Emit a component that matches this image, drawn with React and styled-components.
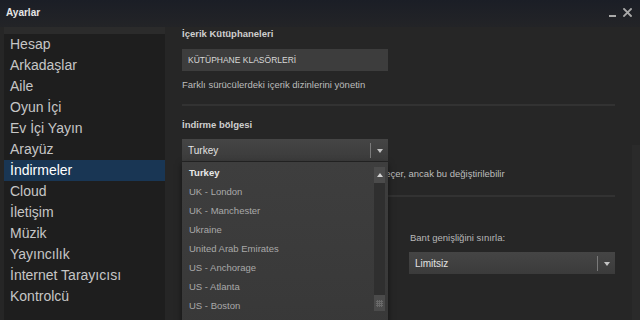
import styled, { createGlobalStyle } from "styled-components";

const GlobalStyle = createGlobalStyle`
  html, body {
    margin: 0;
    padding: 0;
    background: #262626;
  }
  * {
    box-sizing: border-box;
  }
`;

const NAV_ITEMS = [
  "Hesap",
  "Arkadaşlar",
  "Aile",
  "Oyun İçi",
  "Ev İçi Yayın",
  "Arayüz",
  "İndirmeler",
  "Cloud",
  "İletişim",
  "Müzik",
  "Yayıncılık",
  "İnternet Tarayıcısı",
  "Kontrolcü",
];

const REGIONS = [
  "Turkey",
  "UK - London",
  "UK - Manchester",
  "Ukraine",
  "United Arab Emirates",
  "US - Anchorage",
  "US - Atlanta",
  "US - Boston",
];

// Whole settings window
const App = () => {
  return (
    <>
      <GlobalStyle />
      <Window>
        <TitleBar>
          <Title>Ayarlar</Title>
          <WindowButtons>
            <Minimize />
            <CloseIcon />
          </WindowButtons>
        </TitleBar>
        <Body>
          <Sidebar>
            <SidebarTop />
            {NAV_ITEMS.map((item) => (
              <NavItem key={item} active={item === "İndirmeler"}>
                {item}
              </NavItem>
            ))}
          </Sidebar>
          <Content>
            <Heading>İçerik Kütüphaneleri</Heading>
            <Button>KÜTÜPHANE KLASÖRLERİ</Button>
            <Description>Farklı sürücülerdeki içerik dizinlerini yönetin</Description>
            <Divider />
            <Heading top={12}>İndirme bölgesi</Heading>
            <SelectWrap>
              <Select>
                <span>Turkey</span>
                <SelectArrow />
              </Select>
              <DropList>
                <ListItems>
                  {REGIONS.map((region, i) => (
                    <ListItem key={region} selected={i === 0}>
                      {region}
                    </ListItem>
                  ))}
                </ListItems>
                <ListScroll>
                  <ScrollUp />
                  <ScrollThumb />
                </ListScroll>
              </DropList>
            </SelectWrap>
            {/* the start of this line sits under the open region list */}
            <Description top={7}>
              Steam size en yakın sunucuyu otomatik olarak seçer, ancak bu değiştirilebilir
            </Description>
            <Divider top={15} />
            <Columns>
              <Column />
              <Column>
                <Label>Bant genişliğini sınırla:</Label>
                <Select>
                  <span>Limitsiz</span>
                  <SelectArrow />
                </Select>
              </Column>
            </Columns>
          </Content>
          <PageScroll />
        </Body>
      </Window>
    </>
  );
};

const CloseIcon = () => (
  <svg width="9" height="9" viewBox="0 0 9 9">
    <path
      d="M1 1 L8 8 M8 1 L1 8"
      stroke="#a9a9a9"
      strokeWidth="1.8"
      strokeLinecap="square"
    />
  </svg>
);

const Window = styled.div`
  width: 640px;
  height: 320px;
  display: flex;
  flex-direction: column;
  background: #262626;
  font-family: "Liberation Sans", Arial, sans-serif;
  overflow: hidden;
`;

const TitleBar = styled.div`
  height: 27px;
  flex-shrink: 0;
  display: flex;
  align-items: center;
  justify-content: space-between;
  padding: 0 8px 2px 6px;
  background: linear-gradient(#1b1e26, #232427);
`;

const Title = styled.div`
  color: #e6e6e6;
  font-size: 10px;
  font-weight: bold;
`;

const WindowButtons = styled.div`
  display: flex;
  align-items: center;
  gap: 7px;
`;

const Minimize = styled.div`
  width: 7px;
  height: 2px;
  margin-top: 6px;
  background: #a9a9a9;
`;

const Body = styled.div`
  flex: 1;
  display: flex;
  min-height: 0;
`;

const Sidebar = styled.div`
  width: 161px;
  margin-left: 4px;
  background: #1e1e1e;
  display: flex;
  flex-direction: column;
`;

const SidebarTop = styled.div`
  height: 7px;
  background: #2b2b2b;
`;

const NavItem = styled.div`
  height: 21px;
  line-height: 21px;
  padding-left: 6px;
  font-size: 14px;
  color: ${({ active }) => (active ? "#ffffff" : "#c6c6c6")};
  background: ${({ active }) => (active ? "#193654" : "transparent")};
  white-space: nowrap;
`;

const Content = styled.div`
  width: 450px;
  padding-left: 17px;
  display: flex;
  flex-direction: column;
  align-items: flex-start;
`;

const Heading = styled.div`
  margin-top: ${({ top }) => top || 0}px;
  line-height: 13px;
  font-size: 9.5px;
  font-weight: 600;
  color: #cfcfcf;
`;

const Button = styled.div`
  margin-top: 9px;
  width: 206px;
  height: 22px;
  line-height: 22px;
  padding-left: 6px;
  background: #3d3d3d;
  color: #d8d8d8;
  font-size: 8.5px;
`;

const Description = styled.div`
  margin-top: ${({ top }) => top || 8}px;
  line-height: 12px;
  font-size: 9.5px;
  color: #bdbdbd;
  white-space: nowrap;
`;

const Divider = styled.div`
  margin-top: ${({ top }) => top || 13}px;
  width: 433px;
  height: 2px;
  background: #323232;
`;

const SelectWrap = styled.div`
  position: relative;
  z-index: 2;
  margin-top: 8px;
`;

const Select = styled.div`
  width: 206px;
  height: 22px;
  display: flex;
  align-items: center;
  justify-content: space-between;
  padding-left: 6px;
  background: linear-gradient(#454545, #3b3b3b);
  color: #e2e2e2;
  font-size: 10px;
`;

const SelectArrow = styled.div`
  width: 18px;
  height: 15px;
  border-left: 1px solid #7a7a7a;
  display: flex;
  align-items: center;
  justify-content: center;

  &::after {
    content: "";
    border-left: 3.5px solid transparent;
    border-right: 3.5px solid transparent;
    border-top: 4px solid #c4c4c4;
    margin-top: 1px;
  }
`;

const DropList = styled.div`
  position: absolute;
  top: 23px;
  left: 0;
  width: 206px;
  height: 170px;
  display: flex;
  background: linear-gradient(#3e3e3e, #383838);
  box-shadow: 0 2px 6px rgba(0, 0, 0, 0.5);
`;

const ListItems = styled.div`
  flex: 1;
  padding-top: 1px;
`;

const ListItem = styled.div`
  height: 19px;
  line-height: 19px;
  padding-left: 7px;
  font-size: 9.5px;
  color: ${({ selected }) => (selected ? "#e8e8e8" : "#a9a9a9")};
  font-weight: ${({ selected }) => (selected ? "bold" : "normal")};
`;

const ListScroll = styled.div`
  width: 11px;
  margin: 5px 3px 0 0;
  height: 144px;
  display: flex;
  flex-direction: column;
  justify-content: space-between;
  background: #2f2f2f;
`;

const ScrollUp = styled.div`
  height: 16px;
  background: #4b4b4b;
  display: flex;
  align-items: center;
  justify-content: center;

  &::after {
    content: "";
    border-left: 3.5px solid transparent;
    border-right: 3.5px solid transparent;
    border-bottom: 4px solid #d4d4d4;
  }
`;

const ScrollThumb = styled.div`
  height: 16px;
  background-color: #4b4b4b;
  background-image: repeating-linear-gradient(
      90deg,
      transparent 0 1px,
      #6a6a6a 1px 2px
    ),
    repeating-linear-gradient(0deg, transparent 0 1px, #6a6a6a 1px 2px);
  background-size: 7px 7px;
  background-position: center;
  background-repeat: no-repeat;
`;

const Columns = styled.div`
  display: flex;
  gap: 21px;
`;

const Column = styled.div`
  width: 206px;
  display: flex;
  flex-direction: column;
`;

const Label = styled.div`
  margin-top: 35px;
  margin-bottom: 8px;
  padding-left: 1px;
  line-height: 12px;
  font-size: 9.5px;
  color: #b8b8b8;
`;

const PageScroll = styled.div`
  width: 8px;
  margin-left: auto;
  margin-top: 118px;
  background: #2a2a2a;
`;

export default App;
